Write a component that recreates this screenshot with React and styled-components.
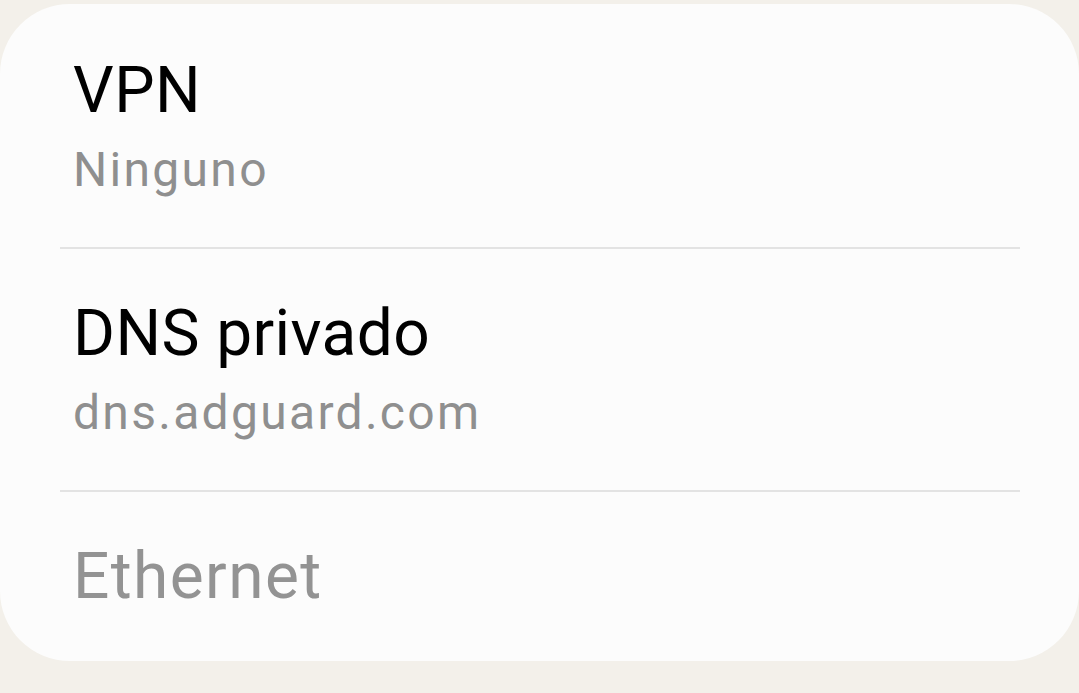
import React from "react";
import styled, { createGlobalStyle } from "styled-components";

const GlobalStyle = createGlobalStyle`
  html, body {
    margin: 0;
    padding: 0;
    background: #f3f0ea;
  }
  body {
    font-family: Roboto, "Noto Sans", sans-serif;
    -webkit-font-smoothing: antialiased;
  }
`;

const items = [
  { title: "VPN", summary: "Ninguno" },
  { title: "DNS privado", summary: "dns.adguard.com" },
  { title: "Ethernet", disabled: true },
];

const App = () => (
  <>
    <GlobalStyle />
    <Page>
      <Card>
        {items.map((item, i) => (
          <React.Fragment key={item.title}>
            {i > 0 && <Divider />}
            <Row $first={i === 0} $last={i === items.length - 1}>
              <Title $disabled={item.disabled}>{item.title}</Title>
              {item.summary && <Summary>{item.summary}</Summary>}
            </Row>
          </React.Fragment>
        ))}
      </Card>
    </Page>
  </>
);

const Page = styled.div`
  width: 1079px;
  height: 693px;
  padding-top: 4px;
  box-sizing: border-box;
  overflow: hidden;
`;

const Card = styled.div`
  display: flex;
  flex-direction: column;
  background: #fcfcfc;
  border-radius: 70px;
  padding: 0 59px 0 60px;
`;

const Row = styled.div`
  display: flex;
  flex-direction: column;
  padding: ${(p) => (p.$first ? "49px" : "47px")} 13px
    ${(p) => (p.$last ? "46px" : "49px")};
`;

const Title = styled.div`
  font-size: 64px;
  line-height: 76px;
  letter-spacing: ${(p) => (p.$disabled ? "1.4px" : "0.4px")};
  color: ${(p) => (p.$disabled ? "#939393" : "#000")};
`;

const Summary = styled.div`
  margin-top: 13px;
  font-size: 48px;
  line-height: 56px;
  letter-spacing: 2.3px;
  color: #8f8f8f;
`;

const Divider = styled.div`
  height: 2px;
  background: #e3e3e3;
`;

export default App;
